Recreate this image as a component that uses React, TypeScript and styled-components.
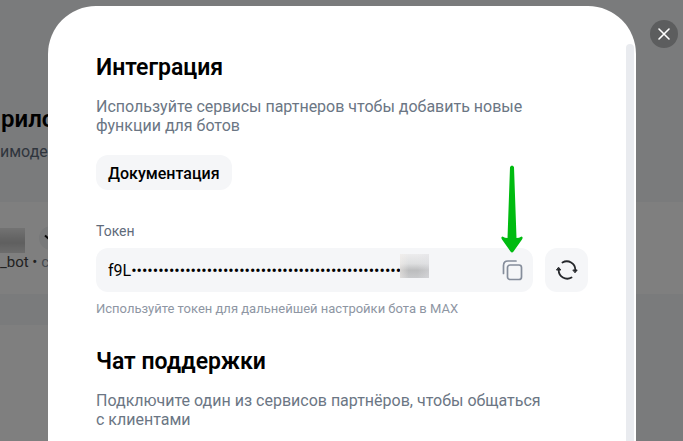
import React from "react";
import styled, { createGlobalStyle } from "styled-components";

const GlobalStyle = createGlobalStyle`
  * { box-sizing: border-box; }
  html, body, #root { height: 100%; }
  body {
    margin: 0;
    overflow: hidden;
    font-family: Roboto, "Noto Sans", sans-serif;
    font-size: 16px;
    line-height: 19px;
    color: #000;
    background: #f5f6f8;
  }
  h1, h2, p { margin: 0; }
  button { border: 0; padding: 0; font: inherit; color: inherit; cursor: pointer; }
`;

const Page = styled.div`
  height: 100%;
  display: flex;
  flex-direction: column;
  overflow: hidden;
`;

const PageHeader = styled.header`
  height: 202px;
  padding-top: 106px;
  display: flex;
  flex-direction: column;
  gap: 12px;
  flex-shrink: 0;
`;

const PageTitle = styled.h1`
  padding-left: 1px;
  font-size: 24px;
  line-height: 26px;
  font-weight: 600;
`;

const PageNote = styled.p`
  color: #5f6b7b;
  line-height: 16px;
`;

const BotCard = styled.section`
  height: 92px;
  padding-top: 25px;
  background: #fff;
  flex-shrink: 0;
`;

const BotTop = styled.div`
  display: flex;
  align-items: center;
  gap: 14px;
  height: 26px;
`;

const BlurredName = styled.span`
  width: 25px;
  height: 25px;
  background: linear-gradient(#e6e6e6, #cacaca 40%, #c0c0c0 60%, #dadada);
`;

const Chevron = styled.button`
  display: flex;
  align-items: center;
  justify-content: flex-start;
  width: 24px;
  height: 24px;
  padding-left: 5px;
  border-radius: 12px;
  background: #f1f2f4;
  margin-bottom: 4px;
`;

const BotHandle = styled.p`
  font-size: 15px;
  line-height: 18px;
  color: #444;
  span { color: #8e96a3; }
`;

const Panel = styled.section`
  width: 50%;
  flex: 1;
  margin-top: 31px;
  background: #fff;
`;

const Overlay = styled.div`
  position: fixed;
  inset: 0;
  padding: 6px 0 0 1px;
  display: flex;
  justify-content: center;
  background: rgba(0, 0, 0, 0.5);
`;

const Modal = styled.div`
  position: relative;
  width: 588px;
  max-width: 90%;
  height: 100%;
`;

const Sheet = styled.main`
  height: 100%;
  overflow: hidden;
  padding: 48px 48px 0;
  border-radius: 48px 48px 0 0;
  background: #fff;
`;

const Scrollbar = styled.div`
  position: absolute;
  top: 38px;
  right: 2px;
  bottom: 0;
  width: 8px;
  border-radius: 4px 4px 0 0;
  background: #e9ebef;
`;

const CloseButton = styled.button`
  position: absolute;
  top: 14px;
  left: calc(100% + 14px);
  width: 28px;
  height: 28px;
  border-radius: 50%;
  display: grid;
  place-items: center;
  background: #5c5d5e;
`;

const Block = styled.section`
  margin-bottom: 30px;
`;

const Title = styled.h2`
  font-size: 23px;
  line-height: 28px;
  font-weight: 600;
  margin-bottom: 15px;
`;

const Description = styled.p`
  color: #6b7684;
`;

const DocsButton = styled.button`
  height: 35px;
  margin-top: 20px;
  padding: 2px 12px 0;
  border-radius: 12px;
  font-weight: 500;
  background: #f5f6f8;
`;

const Label = styled.label`
  display: block;
  margin-top: 32px;
  margin-bottom: 8px;
  font-size: 14px;
  line-height: 18px;
  color: #5f6b7b;
`;

const TokenRow = styled.div`
  display: flex;
  gap: 12px;
`;

const TokenField = styled.div`
  position: relative;
  flex: 1;
  min-width: 0;
  height: 44px;
  padding: 0 10px 0 12px;
  display: flex;
  align-items: center;
  border-radius: 12px;
  background: #f5f6f8;
`;

const TokenInput = styled.input`
  flex: 1;
  min-width: 0;
  height: 100%;
  padding: 0;
  border: 0;
  outline: 0;
  font: inherit;
  background: none;
`;

const TokenMask = styled.span`
  position: absolute;
  top: 6px;
  left: 304px;
  width: 29px;
  height: 24px;
  background:
    linear-gradient(90deg, rgba(245, 240, 235, 0.5), transparent 30%, transparent 60%, rgba(225, 225, 230, 0.4)),
    linear-gradient(#ececed, #dedfe0 40%, #bcbdbe 68%, #c9cacc);
`;

const CopyButton = styled.button`
  display: flex;
  background: none;
`;

const RefreshButton = styled.button`
  width: 43px;
  height: 44px;
  border-radius: 12px;
  display: grid;
  place-items: center;
  background: #f5f6f8;
`;

const Hint = styled.p`
  margin-top: 8px;
  font-size: 13px;
  line-height: 18px;
  color: #8e96a3;
`;

const Pointer = styled.svg`
  position: absolute;
  right: 10px;
  bottom: 38px;
  pointer-events: none;
`;

const TOKEN = "f9L" + "•".repeat(50);

export default function App() {
  return (
    <>
      <GlobalStyle />
      <Page>
        <PageHeader>
          <PageTitle>рило</PageTitle>
          <PageNote>имоде</PageNote>
        </PageHeader>
        <BotCard>
          <BotTop>
            <BlurredName />
            <Chevron aria-label="Выбрать бота">
              <svg width="12" height="8" viewBox="0 0 12 8" fill="none" stroke="#111" strokeWidth="2">
                <path d="M1 1.5 6 6l5-4.5" />
              </svg>
            </Chevron>
          </BotTop>
          <BotHandle>_bot • <span>с</span></BotHandle>
        </BotCard>
        <Panel />
      </Page>

      <Overlay>
        <Modal role="dialog" aria-labelledby="integration">
          <Sheet>
            <Block>
              <Title id="integration">Интеграция</Title>
              <Description>
                Используйте сервисы партнеров чтобы добавить новые
                <br />
                функции для ботов
              </Description>
              <DocsButton>Документация</DocsButton>
              <Label htmlFor="token">Токен</Label>
              <TokenRow>
                <TokenField>
                  <TokenInput id="token" readOnly value={TOKEN} />
                  <TokenMask />
                  <CopyButton aria-label="Скопировать токен">
                    <svg width="21" height="22" viewBox="0 0 21 22" fill="none" stroke="#858d9b" strokeWidth="1.7" strokeLinecap="round">
                      <rect x="5.5" y="6" width="14" height="14.5" rx="2.5" />
                      <path d="M1.5 14.5V6.5Q1.5 2 6 2H14" />
                    </svg>
                  </CopyButton>
                  <Pointer width="22" height="90" viewBox="0 0 22 90" fill="#00bb10">
                    <path d="M9 3Q11 0 13 3L15.5 74Q18 74 20.5 72.5Q22.5 73 21 75.5L12.5 87.5Q11 89.5 9.5 87.5L1 75.5Q-.5 73 1.5 72.5Q4 74 6.5 74Z" />
                  </Pointer>
                </TokenField>
                <RefreshButton aria-label="Обновить токен">
                  <svg width="22" height="20" viewBox="0 0 22 20" fill="none" stroke="#25272b" strokeWidth="1.8" strokeLinecap="round">
                    <path d="M6.5 2.5A8.5 8.5 0 0 1 19.3 10" />
                    <path d="M15.5 17.5A8.5 8.5 0 0 1 2.7 10" />
                    <path d="M17.2 10H21.2L19.2 12.5ZM.8 10H4.8L2.8 7.5Z" fill="#25272b" strokeWidth="1" strokeLinejoin="round" />
                  </svg>
                </RefreshButton>
              </TokenRow>
              <Hint>Используйте токен для дальнейшей настройки бота в MAX</Hint>
            </Block>
            <Block>
              <Title>Чат поддержки</Title>
              <Description>
                Подключите один из сервисов партнёров, чтобы общаться
                <br />с клиентами
              </Description>
            </Block>
          </Sheet>
          <Scrollbar />
          <CloseButton aria-label="Закрыть">
            <svg width="12" height="12" viewBox="0 0 12 12" stroke="#fff" strokeWidth="1.6" strokeLinecap="round">
              <path d="M1 1l10 10M11 1 1 11" />
            </svg>
          </CloseButton>
        </Modal>
      </Overlay>
    </>
  );
}
